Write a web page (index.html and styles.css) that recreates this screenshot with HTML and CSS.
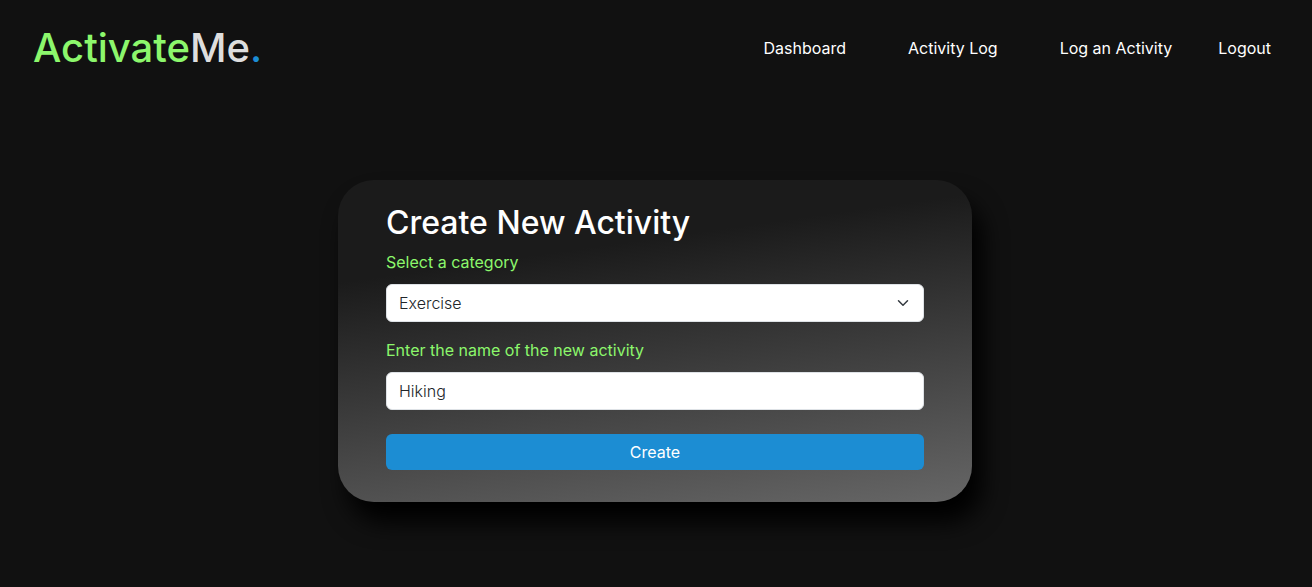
FILE: index.html
```html
<!DOCTYPE html>
<html lang="en">
<head>
<meta charset="utf-8">
<meta name="viewport" content="width=device-width, initial-scale=1">
<title>ActivateMe</title>
<link rel="stylesheet" href="styles.css">
</head>
<body>
<header class="navbar">
  <a class="brand" href="#"><span class="brand-main">Activate</span>Me<span class="brand-dot">.</span></a>
  <nav class="nav">
    <a class="nav-link" href="#">Dashboard</a>
    <a class="nav-link" href="#">Activity Log</a>
    <a class="nav-link" href="#">Log an Activity</a>
    <a class="nav-link nav-link-last" href="#">Logout</a>
  </nav>
</header>
<main class="page">
  <form class="card">
    <h1 class="card-title">Create New Activity</h1>
    <label class="label" for="category">Select a category</label>
    <div class="select-wrap">
      <select class="control" id="category"><option>Exercise</option></select>
      <svg class="chevron" viewBox="0 0 16 16" aria-hidden="true"><path d="m2 5 6 6 6-6"/></svg>
    </div>
    <label class="label" for="name">Enter the name of the new activity</label>
    <input class="control" id="name" type="text" value="Hiking">
    <button class="submit" type="button">Create</button>
  </form>
</main>
</body>
</html>
```
FILE: styles.css
```css
* {
  box-sizing: border-box;
}

body {
  margin: 0;
  background: #111;
  color: #fff;
  font-family: Inter, "Liberation Sans", sans-serif;
  font-size: 16px;
  line-height: 24px;
}

.navbar {
  display: flex;
  align-items: center;
  justify-content: space-between;
  padding: 16px 41px 16px 33px;
}

.brand {
  color: #dedede;
  font-size: 40px;
  font-weight: 500;
  line-height: 63px;
  text-decoration: none;
}

.brand-main {
  color: #8cf76c;
}

.brand-dot {
  color: #1c8dd3;
}

.nav {
  display: flex;
  gap: 62px;
}

.nav-link {
  color: #fff;
  text-decoration: none;
}

.nav-link-last {
  margin-left: -16px;
}

.page {
  display: flex;
  justify-content: center;
  padding: 85px 16px 80px;
}

.card {
  display: flex;
  flex-direction: column;
  width: 100%;
  max-width: 634px;
  margin-right: 2px;
  padding: 24px 48px 32px;
  border-radius: 36px;
  background: linear-gradient(172deg, #1b1b1b 25%, #666 100%);
  box-shadow: 10px 20px 25px #000;
}

.card-title {
  margin: 0 0 8px;
  font-size: 32px;
  font-weight: 500;
  line-height: 38px;
}

.label {
  margin-bottom: 10px;
  color: #8cf76c;
}

.select-wrap {
  position: relative;
  margin-bottom: 16px;
}

.control {
  display: block;
  width: 100%;
  height: 38px;
  padding: 6px 12px;
  border: 1px solid #dee2e6;
  border-radius: 6px;
  background: #fff;
  color: #212529;
  font: 300 16px/24px Inter, "Liberation Sans", sans-serif;
  appearance: none;
}

.chevron {
  position: absolute;
  top: 13px;
  right: 15px;
  width: 12px;
  height: 12px;
  fill: none;
  stroke: #343a40;
  stroke-width: 2;
  stroke-linecap: round;
  stroke-linejoin: round;
  pointer-events: none;
}

.submit {
  height: 36px;
  margin-top: 24px;
  border: 0;
  border-radius: 6px;
  background: #1c8dd3;
  color: #fff;
  font: 400 16px/24px Inter, "Liberation Sans", sans-serif;
}
```
